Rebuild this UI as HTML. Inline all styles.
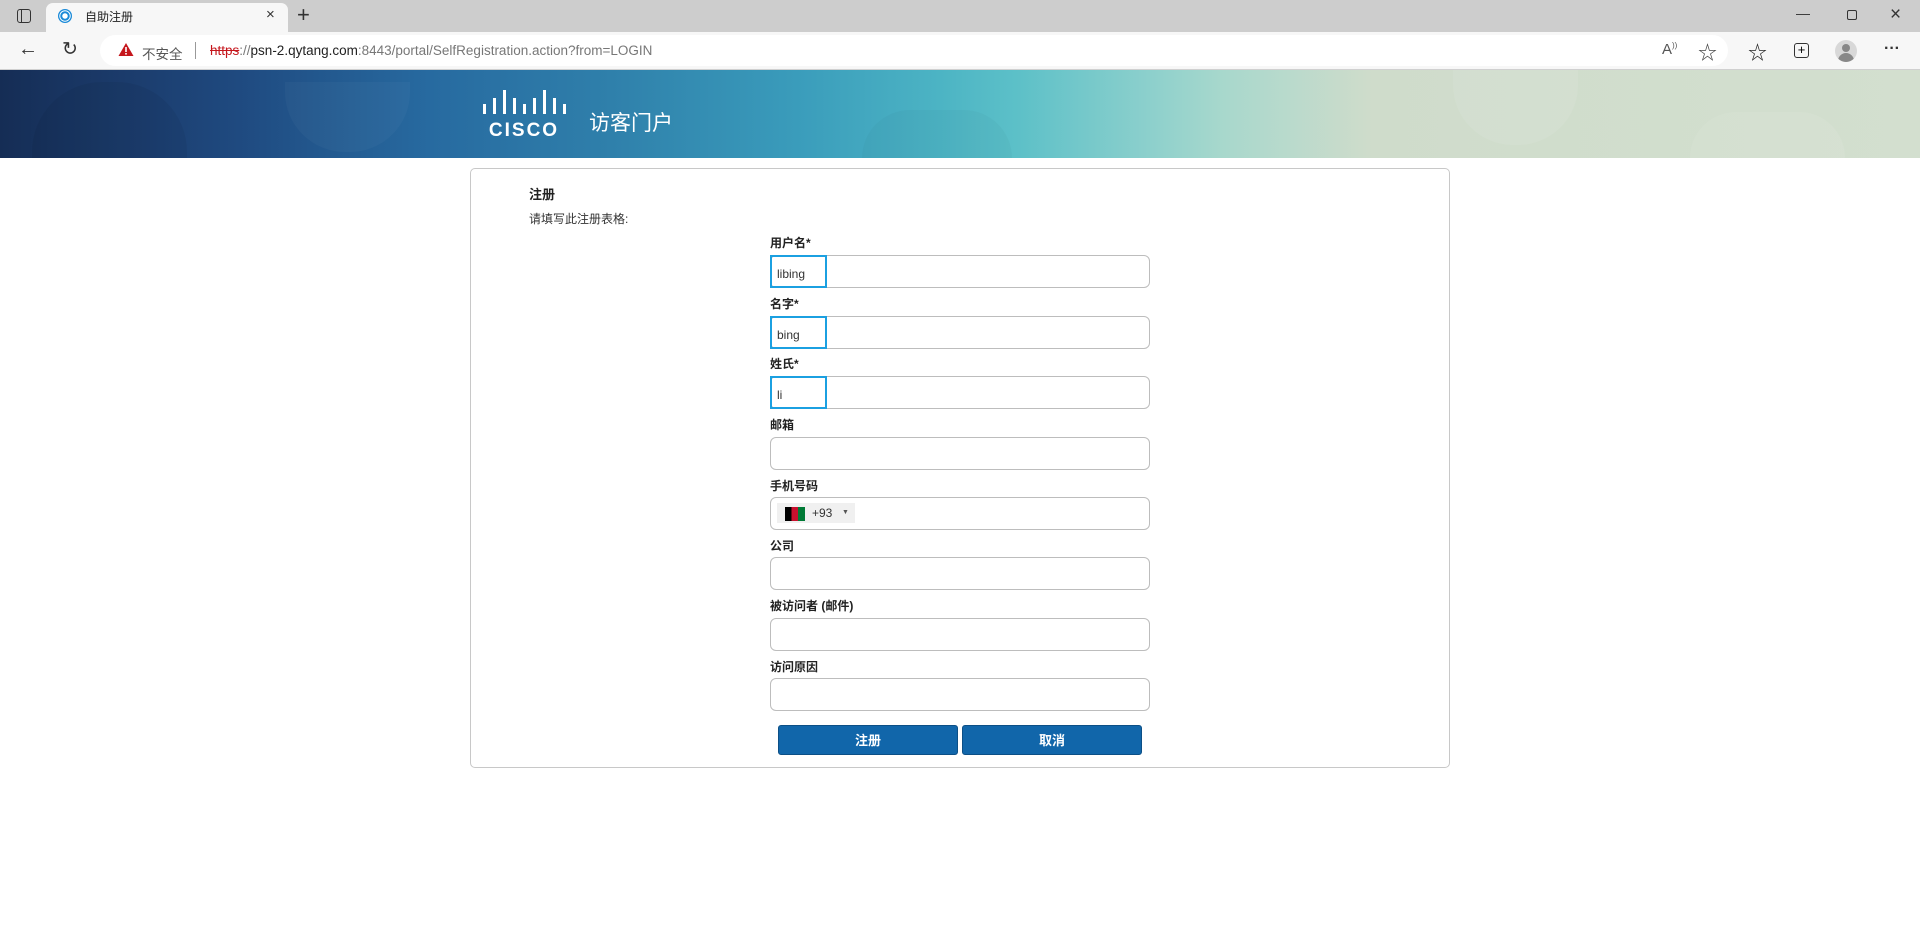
<!DOCTYPE html>
<html><head><meta charset="utf-8"><style>
*{margin:0;padding:0;box-sizing:border-box}
body{width:1920px;height:942px;overflow:hidden;background:#fff;font-family:"Liberation Sans","Noto Sans CJK SC",sans-serif;position:relative}
.abs{position:absolute}
.tabbar{left:0;top:0;width:1920px;height:32px;background:#cdcdcd}
.tab{left:46px;top:3px;width:242px;height:29px;background:#f7f7f7;border-radius:7px 7px 0 0}
.toolbar{left:0;top:32px;width:1920px;height:38px;background:#f7f7f7;border-bottom:1px solid #d0d0d0}
.addr{left:100px;top:35px;width:1628px;height:31px;background:#fff;border-radius:16px}
.banner{left:0;top:70px;width:1920px;height:88px;background:linear-gradient(90deg,#152d55 0,#1b3b6b 122px,#1f4a80 239px,#276aa0 429px,#2f80ab 612px,#3a9cbb 796px,#4cb4c4 940px,#5cc0c8 1016px,#8dd0cc 1151px,#a8d8cc 1224px,#cfdccb 1372px,#d3dfcf 1920px)}
.card{left:470px;top:168px;width:980px;height:600px;border:1px solid #c8c8c8;border-radius:5px}
.lbl{font-size:12px;font-weight:bold;color:#222;left:770px}
.inp{left:770px;width:380px;height:33px;border:1px solid #bdbdbd;border-radius:6px;background:#fff}
.foc{left:770px;width:57px;height:33px;border:2px solid #1ba0e1;font-size:12px;color:#333;padding:10px 0 0 5px}
.btn{top:725px;height:30px;background:#1166aa;border:1px solid #0c4f86;border-radius:3px;color:#fff;font-weight:bold;font-size:13px;text-align:center;line-height:29px}
.ic{color:#333;font-size:18px}
</style></head><body>
<div class="abs tabbar"></div>
<div class="abs" style="left:17px;top:9px;width:14px;height:14px;border:1.5px solid #333;border-radius:3px"></div>
<div class="abs" style="left:17px;top:9px;width:5px;height:14px;border-right:1.5px solid #333"></div>
<div class="abs tab"></div>
<div class="abs" style="left:58px;top:9px;width:14px;height:14px;border-radius:50%;background:radial-gradient(circle,#fff 25%,#1a8ad8 30%,#1a8ad8 45%,#fff 50%,#fff 55%,#1a8ad8 60%)"></div>
<div class="abs" style="left:85px;top:8px;font-size:12px;color:#222">自助注册</div>
<div class="abs" style="left:266px;top:6px;font-size:15px;color:#333">×</div>
<div class="abs" style="left:297px;top:2px;font-size:22px;color:#333;font-weight:300">+</div>
<div class="abs" style="left:1796px;top:5px;font-size:14px;color:#333">—</div>
<div class="abs" style="left:1847px;top:10px;width:10px;height:10px;border:1.2px solid #333;border-radius:2px"></div>
<div class="abs" style="left:1890px;top:4px;font-size:19px;color:#333">×</div>
<div class="abs toolbar"></div>
<div class="abs addr"></div>
<div class="abs ic" style="left:18px;top:38px;font-size:20px">←</div>
<div class="abs ic" style="left:62px;top:38px;font-size:19px">↻</div>
<svg class="abs" style="left:118px;top:42px" width="16" height="15"><path d="M8 1L15.5 14H.5Z" fill="#c5161c"/><rect x="7.2" y="5" width="1.6" height="5" fill="#fff"/><rect x="7.2" y="11" width="1.6" height="1.6" fill="#fff"/></svg>
<div class="abs" style="left:142px;top:43px;font-size:13.5px;color:#555">不安全</div>
<div class="abs" style="left:195px;top:42px;width:1px;height:17px;background:#999"></div>
<div class="abs" style="left:210px;top:43px;font-size:13.5px;color:#777;white-space:nowrap"><span style="color:#c5161c;text-decoration:line-through">https</span>://<span style="color:#222">psn-2.qytang.com</span>:8443/portal/SelfRegistration.action?from=LOGIN</div>
<div class="abs" style="left:1662px;top:41px;font-size:15px;color:#555">A<sup style="font-size:8px">))</sup></div>
<div class="abs" style="left:1698px;top:38px;font-size:19px;color:#444">☆</div>
<div class="abs" style="left:1748px;top:38px;font-size:19px;color:#222">☆</div>
<div class="abs" style="left:1794px;top:43px;width:15px;height:15px;border:1.5px solid #333;border-radius:3px;font-size:13px;line-height:11px;text-align:center">+</div>
<div class="abs" style="left:1835px;top:40px;width:22px;height:22px;border-radius:50%;background:#d8d8d8;overflow:hidden"><div style="width:8px;height:8px;border-radius:50%;background:#888;margin:4px auto 0"></div><div style="width:16px;height:10px;border-radius:8px 8px 0 0;background:#888;margin:1px auto 0"></div></div>
<div class="abs" style="left:1884px;top:40px;font-size:16px;color:#333;font-weight:bold">···</div>
<div class="abs banner"></div>
<div class="abs" style="left:32px;top:82px;width:155px;height:76px;background:rgba(0,0,0,.05);border-radius:70px 70px 0 0"></div>
<div class="abs" style="left:285px;top:82px;width:125px;height:70px;background:rgba(255,255,255,.03);border-radius:0 0 60px 60px"></div>
<div class="abs" style="left:862px;top:110px;width:150px;height:48px;background:rgba(0,0,0,.025);border-radius:70px 70px 0 0"></div>
<div class="abs" style="left:1453px;top:70px;width:125px;height:75px;background:rgba(255,255,255,.08);border-radius:0 0 60px 60px"></div>
<div class="abs" style="left:1690px;top:112px;width:155px;height:46px;background:rgba(255,255,255,.08);border-radius:70px 70px 0 0"></div>
<svg class="abs" style="left:482px;top:90px" width="88" height="48">
<g fill="#fff"><rect x="1" y="14" width="3" height="10"/><rect x="11" y="8" width="3" height="16"/><rect x="21" y="0" width="3" height="24"/><rect x="31" y="8" width="3" height="16"/><rect x="41" y="14" width="3" height="10"/><rect x="51" y="8" width="3" height="16"/><rect x="61" y="0" width="3" height="24"/><rect x="71" y="8" width="3" height="16"/><rect x="81" y="14" width="3" height="10"/></g>
<text x="42" y="46" text-anchor="middle" fill="#fff" font-family="Liberation Sans" font-weight="bold" font-size="19" letter-spacing="2">CISCO</text></svg>
<div class="abs" style="left:589px;top:107px;font-size:21px;color:#fff">访客门户</div>
<div class="abs card"></div>
<div class="abs" style="left:529px;top:184px;font-size:13px;font-weight:bold;color:#222">注册</div>
<div class="abs" style="left:529px;top:210px;font-size:12px;color:#333">请填写此注册表格:</div>
<div class="abs lbl" style="top:234px">用户名*</div>
<div class="abs inp" style="top:255px"></div><div class="abs foc" style="top:255px">libing</div>
<div class="abs lbl" style="top:295px">名字*</div>
<div class="abs inp" style="top:316px"></div><div class="abs foc" style="top:316px">bing</div>
<div class="abs lbl" style="top:355px">姓氏*</div>
<div class="abs inp" style="top:376px"></div><div class="abs foc" style="top:376px">li</div>
<div class="abs lbl" style="top:416px">邮箱</div>
<div class="abs inp" style="top:437px"></div>
<div class="abs lbl" style="top:477px">手机号码</div>
<div class="abs inp" style="top:497px"></div>
<div class="abs" style="left:777px;top:503px;width:78px;height:20px;background:#f0f0f0"></div>
<div class="abs" style="left:785px;top:507px;width:20px;height:14px;background:linear-gradient(90deg,#000 33%,#c8102e 33%,#c8102e 66%,#007a36 66%)"></div>
<div class="abs" style="left:812px;top:506px;font-size:12px;color:#333">+93</div>
<div class="abs" style="left:842px;top:509px;font-size:7px;color:#555">▼</div>
<div class="abs lbl" style="top:537px">公司</div>
<div class="abs inp" style="top:557px"></div>
<div class="abs lbl" style="top:597px">被访问者 (邮件)</div>
<div class="abs inp" style="top:618px"></div>
<div class="abs lbl" style="top:658px">访问原因</div>
<div class="abs inp" style="top:678px"></div>
<div class="abs btn" style="left:778px;width:180px">注册</div>
<div class="abs btn" style="left:962px;width:180px">取消</div>
</body></html>
